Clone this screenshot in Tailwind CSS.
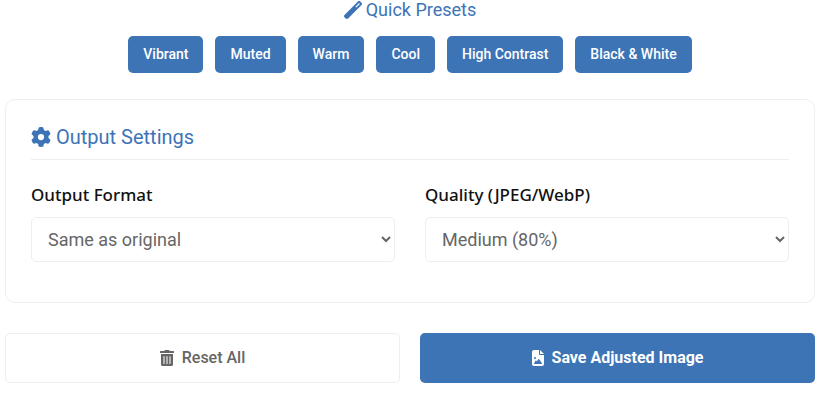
<!DOCTYPE html>
<html lang="en">
<head>
  <meta charset="UTF-8">
  <meta name="viewport" content="width=device-width, initial-scale=1.0">
  <title>Image Adjustment</title>

  <!-- Tailwind CSS -->
  <script src="https://cdn.jsdelivr.net/npm/@tailwindcss/browser@4"></script>
</head>
<body class="bg-white font-[Roboto,sans-serif] text-[#666]">

<main class="pl-[5px] pr-[25px]">
  <!-- Presets -->
  <section>
    <h2 class="flex items-center justify-center gap-1 text-lg leading-5 text-[#3d74b6]">
      <svg class="size-[18px]" viewBox="0 0 512 512" fill="currentColor" aria-hidden="true">
        <path d="M14.1 463.3c-18.7-18.7-18.7-49.1 0-67.9L395.4 14.1c18.7-18.7 49.1-18.7 67.9 0l34.6 34.6c18.7 18.7 18.7 49.1 0 67.9L116.5 497.9c-18.7 18.7-49.1 18.7-67.9 0L14.1 463.3zM347.6 187.6l105-105L429.4 59.3l-105 105 23.3 23.3z" />
      </svg>
      Quick Presets
    </h2>
    <div class="mt-4 flex flex-wrap justify-center gap-3 text-sm font-medium text-white">
      <button class="h-[37px] rounded-[5px] bg-[#3d74b6] px-[15px] pb-[2px]">Vibrant</button>
      <button class="h-[37px] rounded-[5px] bg-[#3d74b6] px-[15px] pb-[2px]">Muted</button>
      <button class="h-[37px] rounded-[5px] bg-[#3d74b6] px-[15px] pb-[2px]">Warm</button>
      <button class="h-[37px] rounded-[5px] bg-[#3d74b6] px-[15px] pb-[2px]">Cool</button>
      <button class="h-[37px] rounded-[5px] bg-[#3d74b6] px-[15px] pb-[2px]">High Contrast</button>
      <button class="h-[37px] rounded-[5px] bg-[#3d74b6] px-[15px] pb-[2px]">Black &amp; White</button>
    </div>
  </section>

  <!-- Output settings -->
  <section class="mt-[26px] rounded-[10px] border border-[#eee] px-[25px] pt-[25px] pb-10">
    <h2 class="flex items-center gap-[5px] border-b border-[#eee] pb-[10px] text-xl leading-6 text-[#3d74b6]">
      <svg class="size-5" viewBox="0 0 512 512" fill="currentColor" aria-hidden="true">
        <path d="M495.9 166.6c3.2 8.7 .5 18.4-6.4 24.6l-43.3 39.4c1.1 8.3 1.7 16.8 1.7 25.4s-.6 17.1-1.7 25.4l43.3 39.4c6.9 6.2 9.6 15.9 6.4 24.6c-4.4 11.9-9.7 23.3-15.8 34.3l-4.7 8.1c-6.6 11-14 21.4-22.1 31.2c-5.9 7.2-15.7 9.6-24.5 6.8l-55.7-17.7c-13.4 10.3-28.2 18.9-44 25.4l-12.5 57.1c-2 9.1-9 16.3-18.2 17.8c-13.8 2.3-28 3.5-42.5 3.5s-28.7-1.2-42.5-3.5c-9.2-1.5-16.2-8.7-18.2-17.8l-12.5-57.1c-15.8-6.5-30.6-15.1-44-25.4L83.1 425.9c-8.8 2.8-18.6 .3-24.5-6.8c-8.1-9.8-15.5-20.2-22.1-31.2l-4.7-8.1c-6.1-11-11.4-22.4-15.8-34.3c-3.2-8.7-.5-18.4 6.4-24.6l43.3-39.4C64.6 273.1 64 264.6 64 256s.6-17.1 1.7-25.4L22.4 191.2c-6.9-6.2-9.6-15.9-6.4-24.6c4.4-11.9 9.7-23.3 15.8-34.3l4.7-8.1c6.6-11 14-21.4 22.1-31.2c5.9-7.2 15.7-9.6 24.5-6.8l55.7 17.7c13.4-10.3 28.2-18.9 44-25.4l12.5-57.1c2-9.1 9-16.3 18.2-17.8C227.3 1.2 241.5 0 256 0s28.7 1.2 42.5 3.5c9.2 1.5 16.2 8.7 18.2 17.8l12.5 57.1c15.8 6.5 30.6 15.1 44 25.4l55.7-17.7c8.8-2.8 18.6-.3 24.5 6.8c8.1 9.8 15.5 20.2 22.1 31.2l4.7 8.1c6.1 11 11.4 22.4 15.8 34.3zM256 336a80 80 0 1 0 0-160 80 80 0 1 0 0 160z" />
      </svg>
      Output Settings
    </h2>
    <div class="mt-[22px] grid grid-cols-2 gap-[30px]">
      <div>
        <label for="output_format" class="block font-['Noto_Sans',sans-serif] text-[17px] leading-[26px] font-medium text-[#111]">Output Format</label>
        <select id="output_format" class="mt-[9px] h-[45px] w-full rounded-[5px] border border-[#eee] bg-white px-3 text-lg">
          <option>Same as original</option>
          <option>JPEG</option>
          <option>PNG</option>
          <option>WebP</option>
        </select>
      </div>
      <div>
        <label for="output_quality" class="block font-['Noto_Sans',sans-serif] text-[17px] leading-[26px] font-medium text-[#111]">Quality (JPEG/WebP)</label>
        <select id="output_quality" class="mt-[9px] h-[45px] w-full rounded-[5px] border border-[#eee] bg-white px-3 text-lg">
          <option>Medium (80%)</option>
          <option>High (90%)</option>
          <option>Low (60%)</option>
        </select>
      </div>
    </div>
  </section>

  <!-- Actions -->
  <div class="mt-[30px] grid grid-cols-2 gap-5">
    <button class="flex h-[50px] items-center justify-center gap-2 rounded-[5px] border border-[#eee] bg-white font-medium">
      <svg class="h-4 w-[14px]" viewBox="0 0 448 512" fill="currentColor" aria-hidden="true">
        <path d="M32 464a48 48 0 0 0 48 48h288a48 48 0 0 0 48-48V128H32zm272-256a16 16 0 0 1 32 0v224a16 16 0 0 1-32 0zm-96 0a16 16 0 0 1 32 0v224a16 16 0 0 1-32 0zm-96 0a16 16 0 0 1 32 0v224a16 16 0 0 1-32 0zM432 32H312l-9.4-18.7A24 24 0 0 0 281.1 0H166.8a23.72 23.72 0 0 0-21.4 13.3L136 32H16A16 16 0 0 0 0 48v32a16 16 0 0 0 16 16h416a16 16 0 0 0 16-16V48a16 16 0 0 0-16-16z" />
      </svg>
      Reset All
    </button>
    <button class="flex h-[50px] items-center justify-center gap-2 rounded-[5px] bg-[#3d74b6] font-bold text-white">
      <svg class="h-4 w-3" viewBox="0 0 384 512" fill="currentColor" aria-hidden="true">
        <path d="M64 0C28.7 0 0 28.7 0 64V448c0 35.3 28.7 64 64 64H320c35.3 0 64-28.7 64-64V160H256c-17.7 0-32-14.3-32-32V0H64zM256 0V128H384L256 0zM64 256a32 32 0 1 1 64 0 32 32 0 1 1 -64 0zm152 32c5.3 0 10.2 2.6 13.2 6.9l88 128c3.4 4.9 3.7 11.3 1 16.5s-8.2 8.6-14.2 8.6H216 176 128 80c-5.8 0-11.1-3.1-13.9-8.1s-2.8-11.2 .2-16.1l48-80c2.9-4.8 8.1-7.8 13.7-7.8s10.8 2.9 13.7 7.8l12.8 21.4 48.3-70.2c3-4.3 7.9-6.9 13.2-6.9z" />
      </svg>
      Save Adjusted Image
    </button>
  </div>
</main>

</body>
</html>
